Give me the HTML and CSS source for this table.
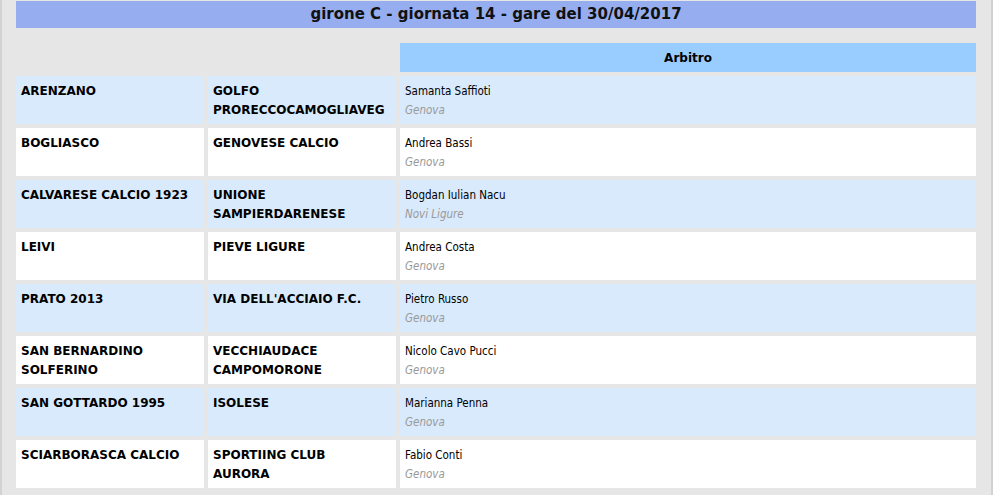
FILE: index.html
```html
<!DOCTYPE html>
<html lang="it">
<head>
<meta charset="utf-8">
<title>girone C - giornata 14</title>
<link rel="stylesheet" href="styles.css">
</head>
<body>
<div class="page">
  <div class="title">girone C - giornata 14 - gare del 30/04/2017</div>
  <div class="grid">
    <div class="blank"></div>
    <div class="blank"></div>
    <div class="head">Arbitro</div>

    <div class="cell team alt">ARENZANO</div>
    <div class="cell team alt">GOLFO PRORECCOCAMOGLIAVEG</div>
    <div class="cell ref alt"><span class="name">Samanta Saffioti</span><span class="city">Genova</span></div>

    <div class="cell team">BOGLIASCO</div>
    <div class="cell team">GENOVESE CALCIO</div>
    <div class="cell ref"><span class="name">Andrea Bassi</span><span class="city">Genova</span></div>

    <div class="cell team alt">CALVARESE CALCIO 1923</div>
    <div class="cell team alt">UNIONE SAMPIERDARENESE</div>
    <div class="cell ref alt"><span class="name">Bogdan Iulian Nacu</span><span class="city">Novi Ligure</span></div>

    <div class="cell team">LEIVI</div>
    <div class="cell team">PIEVE LIGURE</div>
    <div class="cell ref"><span class="name">Andrea Costa</span><span class="city">Genova</span></div>

    <div class="cell team alt">PRATO 2013</div>
    <div class="cell team alt">VIA DELL'ACCIAIO F.C.</div>
    <div class="cell ref alt"><span class="name">Pietro Russo</span><span class="city">Genova</span></div>

    <div class="cell team">SAN BERNARDINO SOLFERINO</div>
    <div class="cell team">VECCHIAUDACE CAMPOMORONE</div>
    <div class="cell ref"><span class="name">Nicolo Cavo Pucci</span><span class="city">Genova</span></div>

    <div class="cell team alt">SAN GOTTARDO 1995</div>
    <div class="cell team alt">ISOLESE</div>
    <div class="cell ref alt"><span class="name">Marianna Penna</span><span class="city">Genova</span></div>

    <div class="cell team">SCIARBORASCA CALCIO</div>
    <div class="cell team">SPORTIING CLUB AURORA</div>
    <div class="cell ref"><span class="name">Fabio Conti</span><span class="city">Genova</span></div>
  </div>
</div>
</body>
</html>
```

FILE: styles.css
```css
html, body {
  margin: 0;
  padding: 0;
  background: #e6e6e6;
}

.page {
  box-sizing: border-box;
  width: 993px;
  min-height: 495px;
  border-left: 2px solid #d2d2d2;
  border-right: 2px solid #d2d2d2;
  padding: 1px 15px 0 14px;
  color: #000;
  font-family: "DejaVu Sans", Verdana, sans-serif;
}

.title {
  height: 27px;
  line-height: 27px;
  background: #96aef0;
  text-align: center;
  font-weight: bold;
  font-size: 15px;
  color: #111;
}

.grid {
  margin-top: 15px;
  display: grid;
  grid-template-columns: 188px 188px 576px;
  grid-template-rows: 29px;
  grid-auto-rows: 48px;
  gap: 4px;
}

.head {
  background: #99ccff;
  font-weight: bold;
  font-size: 12px;
  line-height: 29px;
  padding-top: 1px;
  box-sizing: border-box;
  text-align: center;
}

.cell {
  background: #ffffff;
  padding: 6px 5px 0;
  line-height: 19px;
}

.cell.alt {
  background: #d9eafd;
}

.team {
  font-weight: bold;
  font-size: 12px;
  padding-right: 12px;
}

.ref {
  font-family: "DejaVu Sans Condensed", "DejaVu Sans", sans-serif;
  font-stretch: condensed;
  font-size: 11.5px;
}

.name,
.city {
  display: block;
}

.city {
  font-style: italic;
  color: #999999;
}
```
